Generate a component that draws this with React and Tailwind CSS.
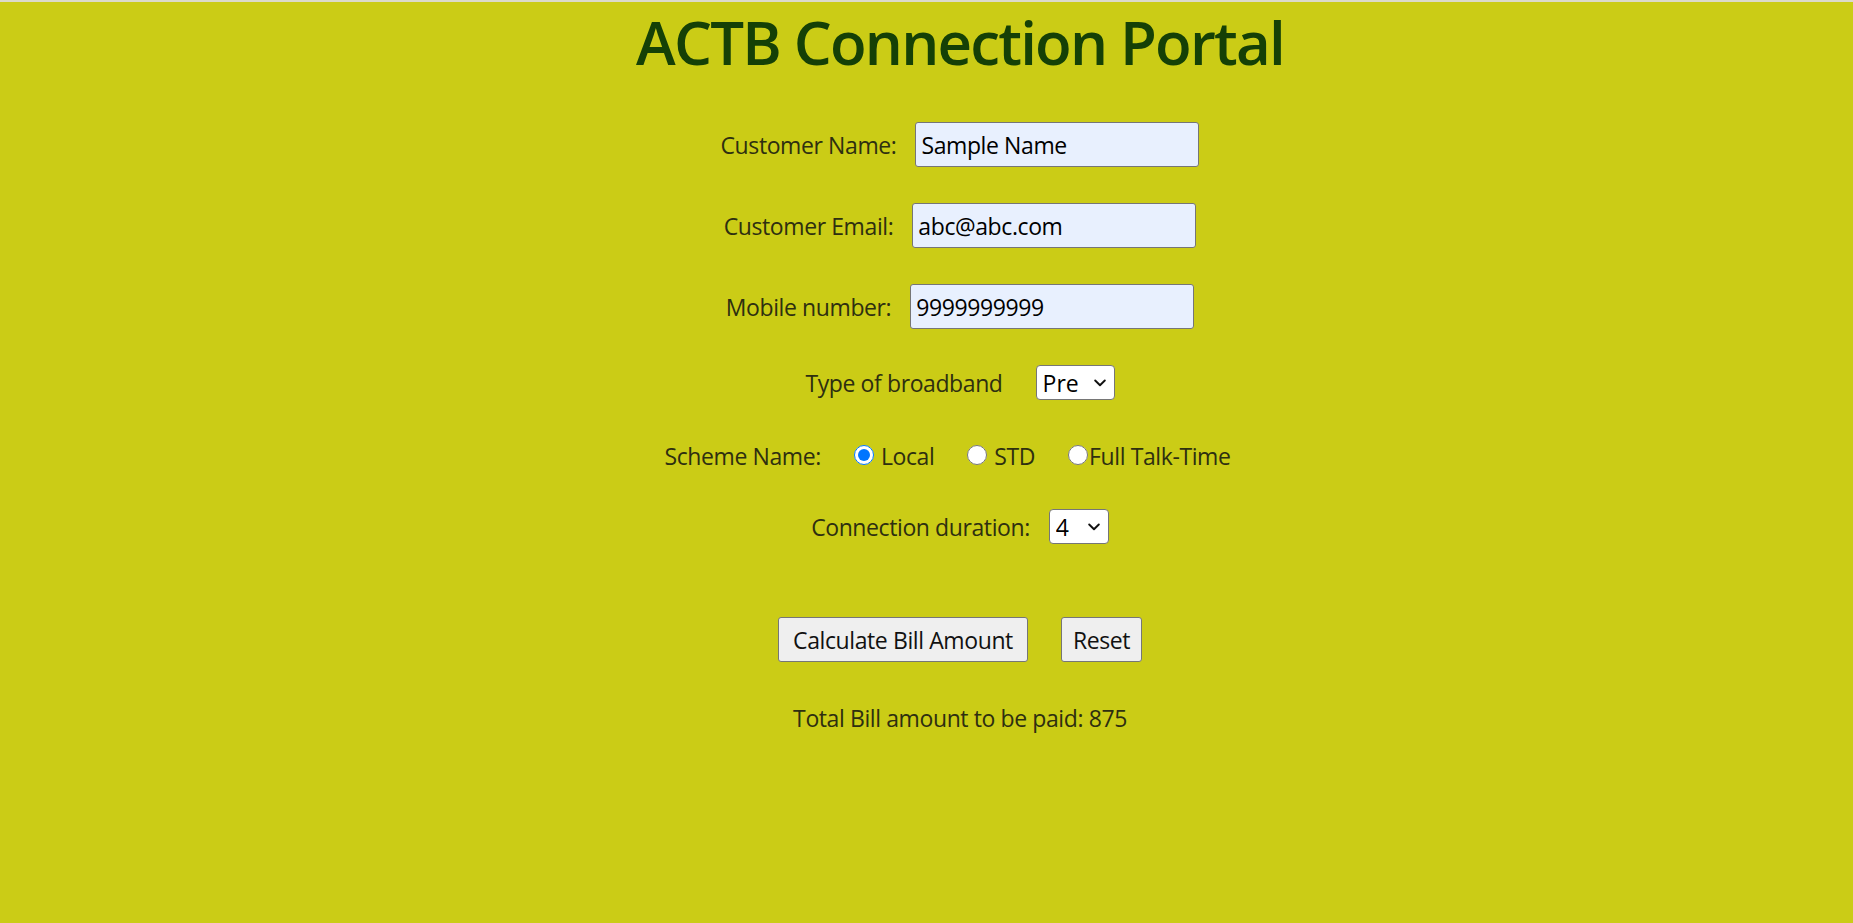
import React from "react";

function Chevron() {
  return (
    <svg
      className="pointer-events-none absolute right-[9px] top-1/2 -translate-y-1/2"
      width="12"
      height="8"
      viewBox="0 0 12 8"
      fill="none"
    >
      <path d="M1.2 1.5 L6 6.2 L10.8 1.5" stroke="#111" strokeWidth="1.9" strokeLinecap="round" strokeLinejoin="round" />
    </svg>
  );
}

function Field({ label, value, type = "text" }) {
  return (
    <div className="flex h-[45px] items-center gap-[19px]">
      <label className="pt-[2px] text-[23px] tracking-[-0.4px] text-[#2e2f10]">{label}</label>
      <input
        type={type}
        defaultValue={value}
        className="h-[45px] w-[284px] rounded-[3px] border border-[#767676] bg-[#e8f0fe] px-[5px] text-[23px] tracking-[-0.4px] text-black outline-none"
      />
    </div>
  );
}

function Select({ width, value, options }) {
  return (
    <div className="relative">
      <select
        defaultValue={value}
        className={`h-[35px] ${width} appearance-none rounded-[4px] border border-[#767676] bg-white pl-[6px] text-[23px] text-black outline-none`}
      >
        {options.map((o) => (
          <option key={o} value={o}>
            {o}
          </option>
        ))}
      </select>
      <Chevron />
    </div>
  );
}

function Radio({ label, checked, gap }) {
  return (
    <label className={`flex items-center ${gap}`}>
      <input
        type="radio"
        name="scheme"
        defaultChecked={checked}
        className="m-0 h-5 w-5 accent-[#0075ff]"
      />
      <span className="pt-[2px] text-[23px] tracking-[-0.4px] text-[#2e2f10]">{label}</span>
    </label>
  );
}

export default function App() {
  return (
    <div className="min-h-screen bg-[#cbcc16] font-['Open_Sans',sans-serif]">
      <div className="h-[2px] bg-[#dcdacb]" />
      <div className="flex flex-col items-center pl-[67px]">
        <h1 className="mt-[10px] text-[60px] font-semibold leading-[60px] tracking-[-1.8px] text-[#154006]">
          ACTB Connection Portal
        </h1>

        <div className="mt-[50px]">
          <Field label="Customer Name:" value="Sample Name" />
        </div>
        <div className="mt-[36px]">
          <Field label="Customer Email:" value="abc@abc.com" type="email" />
        </div>
        <div className="mt-[36px]">
          <Field label="Mobile number:" value="9999999999" type="tel" />
        </div>

        <div className="mt-[36px] flex h-[35px] items-center gap-[33px]">
          <span className="pt-[2px] text-[23px] tracking-[-0.4px] text-[#2e2f10]">Type of broadband</span>
          <Select width="w-[79px]" value="Pre" options={["Pre", "Post"]} />
        </div>

        <div className="mt-[39px] flex h-[32px] items-center gap-[33px] pr-[25px]">
          <span className="pt-[2px] text-[23px] tracking-[-0.4px] text-[#2e2f10]">Scheme Name:</span>
          <Radio label="Local" checked gap="gap-[7px]" />
          <Radio label="STD" gap="gap-[7px]" />
          <Radio label="Full Talk-Time" gap="gap-[1px]" />
        </div>

        <div className="mt-[38px] flex h-[35px] items-center gap-[19px]">
          <span className="pt-[2px] text-[23px] tracking-[-0.4px] text-[#2e2f10]">Connection duration:</span>
          <Select width="w-[60px]" value="4" options={["1", "2", "3", "4", "5", "6"]} />
        </div>

        <div className="mt-[73px] flex h-[45px] items-center gap-[33px]">
          <button className="h-[45px] w-[250px] rounded-[3px] border border-[#767676] bg-[#efefef] pt-[2px] text-[23px] tracking-[-0.4px] text-[#111]">
            Calculate Bill Amount
          </button>
          <button className="h-[45px] w-[81px] rounded-[3px] border border-[#767676] bg-[#efefef] pt-[2px] text-[23px] tracking-[-0.4px] text-[#111]">
            Reset
          </button>
        </div>

        <div className="mt-[39px] flex h-[32px] items-center">
          <p className="pt-[2px] text-[23px] tracking-[-0.4px] text-[#2e2f10]">Total Bill amount to be paid: 875</p>
        </div>
      </div>
    </div>
  );
}
